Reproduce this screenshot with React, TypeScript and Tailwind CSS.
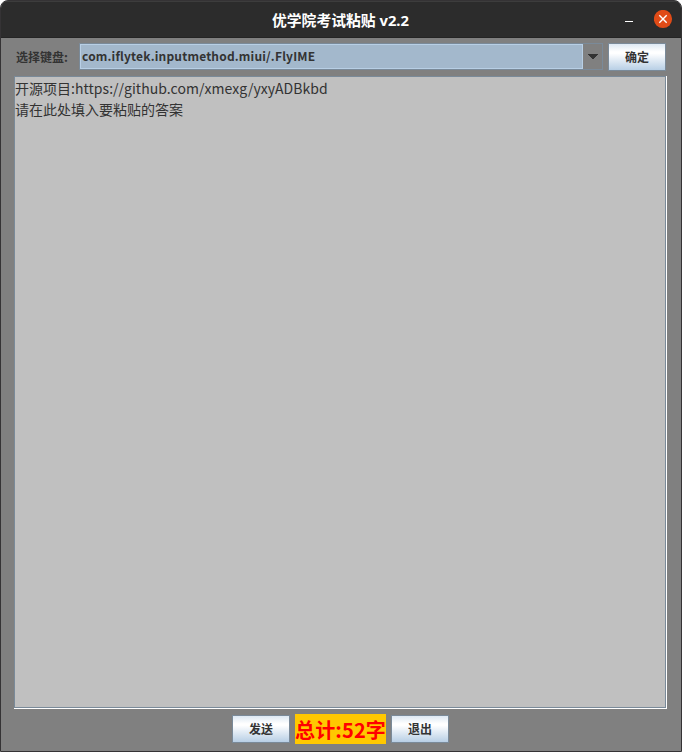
import React from "react";

function MetalButton({ children }: { children: React.ReactNode }) {
  return (
    <button className="flex h-7 w-[58px] shrink-0 items-center justify-center border border-[#7a8a99] bg-[linear-gradient(to_bottom,#dde8f3_0%,#ffffff_30%,#ffffff_36%,#dde8f3_66%,#b8cfe5_100%)] text-[12px] leading-[16px] font-bold text-[#333333]">
      {children}
    </button>
  );
}

export default function App() {
  return (
    <div className="h-[752px] w-[682px] overflow-hidden bg-white font-['Noto_Sans_CJK_SC',sans-serif] text-[#333333]">
      <div className="flex h-full flex-col overflow-hidden rounded-t-[8px] border border-[#353335] bg-[#808080]">
        <header className="flex h-[37px] shrink-0 items-center border-t border-b border-t-[#3d3d3d] border-b-[#242424] bg-[#2c2c2c] pr-[8px] pl-[55px]">
          <h1 className="flex-1 text-center font-['Noto_Sans','Noto_Sans_CJK_SC',sans-serif] text-[14.8px] leading-[20px] font-bold whitespace-pre text-white">优学院考试粘贴 v2.2</h1>
          <div className="flex shrink-0 items-center gap-[21px]">
            <span className="mt-[4px] h-px w-2 bg-white" />
            <svg className="block" width="19" height="19" viewBox="0 0 19 19">
              <circle cx="9" cy="9" r="9.1" fill="#e04b17" />
              <path d="M5.3 5.3 12.7 12.7M12.7 5.3 5.3 12.7" stroke="white" strokeWidth="1.4" />
            </svg>
          </div>
        </header>

        <div className="flex h-[38px] shrink-0 items-start pt-[5px] pl-[15px]">
          <span className="w-[63px] shrink-0 pt-[5px] text-[12px] leading-[17px] font-bold">选择键盘:</span>
          <div className="flex h-[27px] w-[524px] shrink-0 border border-[#7a8a99]">
            <div className="flex w-[503px] items-start border border-[#b8cfe5] bg-[#a3b8cc] pt-[2px] pl-px text-[12px] leading-[17px] font-bold tracking-[0.17px]">
              com.iflytek.inputmethod.miui/.FlyIME
            </div>
            <div className="flex flex-1 items-center pl-[5px]">
              <svg className="block" width="11" height="6" viewBox="0 0 11 6" shapeRendering="crispEdges">
                <path d="M0 0H10V1H9V2H8V3H7V4H6V5H4V4H3V3H2V2H1V1H0Z" fill="#333333" />
              </svg>
            </div>
          </div>
          <div className="ml-[5px]">
            <MetalButton>确定</MetalButton>
          </div>
        </div>

        <div className="ml-[13px] h-[633px] w-[653px] shrink-0 border-r border-b border-white">
          <div className="h-full border border-[#7a8a99] bg-[#c0c0c0] pt-px text-[14px] leading-[21px]">
            <p>开源项目:<span className="tracking-[0.05px]">https://github.com/xmexg/yxyADBkbd</span></p>
            <p>请在此处填入要粘贴的答案</p>
          </div>
        </div>

        <footer className="flex flex-1 items-start justify-start gap-[5px] pt-[5px] pl-[231px]">
          <div className="pt-px">
            <MetalButton>发送</MetalButton>
          </div>
          <span className="flex h-[30px] w-[91px] items-center justify-start bg-[#ffc800] pt-[2px] text-[20px] leading-[30px] font-bold tracking-[0.15px] whitespace-nowrap text-[#ff0000]">总计:52字</span>
          <div className="pt-px">
            <MetalButton>退出</MetalButton>
          </div>
        </footer>
      </div>
    </div>
  );
}
